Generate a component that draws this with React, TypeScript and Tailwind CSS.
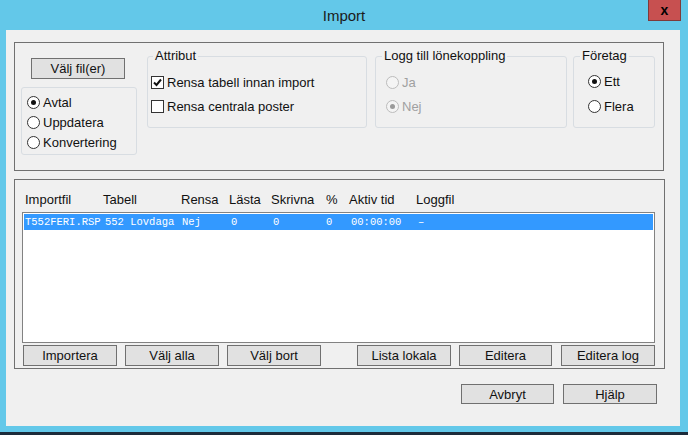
import React from "react";

const ui = { fontFamily: '"Liberation Sans", Arial, sans-serif' };
const mono = { fontFamily: '"Liberation Mono", "Courier New", monospace' };

function Radio({ checked, disabled, label }: { checked?: boolean; disabled?: boolean; label: string }) {
  return (
    <div className="flex h-[20px] items-center">
      <span
        className={`flex h-[13px] w-[13px] items-center justify-center rounded-full border ${
          disabled ? "border-[#bcbcbc] bg-[#f4f4f4]" : "border-[#333333] bg-white"
        }`}
      >
        {checked && <span className={`h-[5px] w-[5px] rounded-full ${disabled ? "bg-[#9a9a9a]" : "bg-[#111111]"}`} />}
      </span>
      <span className={`ml-[3px] ${disabled ? "text-[#a0a0a0]" : "text-[#111111]"}`}>{label}</span>
    </div>
  );
}

function Check({ checked, label }: { checked?: boolean; label: string }) {
  return (
    <div className="flex h-[20px] items-center">
      <span className="flex h-[13px] w-[13px] items-center justify-center border border-[#333333] bg-white">
        {checked && (
          <svg width="9" height="9" viewBox="0 0 9 9">
            <path d="M1 4.5 L3.5 7 L8 1.5" fill="none" stroke="#111" strokeWidth="2" />
          </svg>
        )}
      </span>
      <span className="ml-[3px] text-[#111111]">{label}</span>
    </div>
  );
}

function Btn({ label, w = "w-[94px]", h = "h-[21px]" }: { label: string; w?: string; h?: string }) {
  return (
    <div className={`flex ${w} ${h} items-center justify-center border border-[#707070] bg-[#e1e1e1] text-[#111111]`}>
      {label}
    </div>
  );
}

export default function App() {
  return (
    <div className="flex h-[435px] w-[688px] flex-col bg-[#63c8e9] text-[13px] leading-none" style={ui}>
      {/* title bar */}
      <div className="relative flex h-[30px] shrink-0 items-center justify-center">
        <span className="text-[15px] text-[#1b1b1b]">Import</span>
        <div className="absolute right-[7px] top-0 flex h-[21px] w-[33px] items-center justify-center border border-t-0 border-[#7e3a3a] bg-[#c75050]">
          <span className="text-[14px] font-bold text-black">x</span>
        </div>
      </div>

      {/* client */}
      <div className="ml-[6px] h-[396px] w-[674px] bg-[#f0f0f0] pt-[12px]">
        {/* top box */}
        <div className="ml-[8px] flex h-[129px] w-[650px] items-start border border-[#707070]">
          <div className="ml-[6px] flex flex-col">
            <div className="ml-[10px] mt-[15px]">
              <Btn label="Välj fil(er)" />
            </div>
            <div className="mt-[8px] flex h-[68px] w-[116px] flex-col rounded-[3px] border border-[#d8dde2] pl-[5px] pt-[4px]">
              <Radio checked label="Avtal" />
              <Radio label="Uppdatera" />
              <Radio label="Konvertering" />
            </div>
          </div>

          <fieldset className="ml-[10px] mt-[6px] h-[79px] w-[220px] rounded-[3px] border border-[#d8dde2]">
            <legend className="ml-[5px] px-[2px] leading-[14px] text-[#111111]">Attribut</legend>
            <div className="mt-[9px] flex flex-col gap-[4px] pl-[3px]">
              <Check checked label="Rensa tabell innan import" />
              <Check label="Rensa centrala poster" />
            </div>
          </fieldset>

          <fieldset className="ml-[8px] mt-[6px] h-[79px] w-[192px] rounded-[3px] border border-[#d8dde2]">
            <legend className="ml-[6px] px-[2px] leading-[14px] text-[#111111]">Logg till lönekoppling</legend>
            <div className="mt-[9px] flex flex-col gap-[4px] pl-[10px]">
              <Radio disabled label="Ja" />
              <Radio disabled checked label="Nej" />
            </div>
          </fieldset>

          <fieldset className="ml-[6px] mt-[6px] h-[79px] w-[82px] rounded-[3px] border border-[#d8dde2]">
            <legend className="ml-[6px] px-[2px] leading-[14px] text-[#111111]">Företag</legend>
            <div className="mt-[8px] flex flex-col gap-[5px] pl-[14px]">
              <Radio checked label="Ett" />
              <Radio label="Flera" />
            </div>
          </fieldset>
        </div>

        {/* bottom box */}
        <div className="ml-[8px] mt-[8px] flex h-[190px] w-[651px] flex-col border border-[#707070]">
          <div className="ml-[10px] mt-[11px] grid h-[16px] grid-cols-[78px_78px_48px_42px_55px_23px_67px_auto] items-center text-[#111111]">
            <span>Importfil</span>
            <span>Tabell</span>
            <span>Rensa</span>
            <span>Lästa</span>
            <span>Skrivna</span>
            <span>%</span>
            <span>Aktiv tid</span>
            <span>Loggfil</span>
          </div>
          <div className="ml-[7px] mt-[5px] h-[131px] w-[633px] border border-[#828282] bg-white p-[1px]">
            <div
              className="grid h-[16px] grid-cols-[80px_77px_49px_42px_53px_25px_67px_auto] items-center bg-[#3399ff] pl-[1px] text-[10.5px] text-white"
              style={mono}
            >
              <span>T552FERI.RSP</span>
              <span>552 Lovdaga</span>
              <span>Nej</span>
              <span>0</span>
              <span>0</span>
              <span>0</span>
              <span>00:00:00</span>
              <span>–</span>
            </div>
          </div>
          <div className="ml-[8px] mt-[2px] flex">
            <Btn label="Importera" />
            <div className="ml-[8px]">
              <Btn label="Välj alla" />
            </div>
            <div className="ml-[8px]">
              <Btn label="Välj bort" />
            </div>
            <div className="ml-[36px]">
              <Btn label="Lista lokala" />
            </div>
            <div className="ml-[8px]">
              <Btn label="Editera" w="w-[93px]" />
            </div>
            <div className="ml-[9px]">
              <Btn label="Editera log" />
            </div>
          </div>
        </div>

        <div className="mr-[23px] mt-[15px] flex justify-end gap-[9px]">
          <Btn label="Avbryt" w="w-[93px]" h="h-[20px]" />
          <Btn label="Hjälp" h="h-[20px]" />
        </div>
      </div>
      <div className="mt-[6px] h-[3px] w-full bg-[#1c2b3a]" />
    </div>
  );
}
